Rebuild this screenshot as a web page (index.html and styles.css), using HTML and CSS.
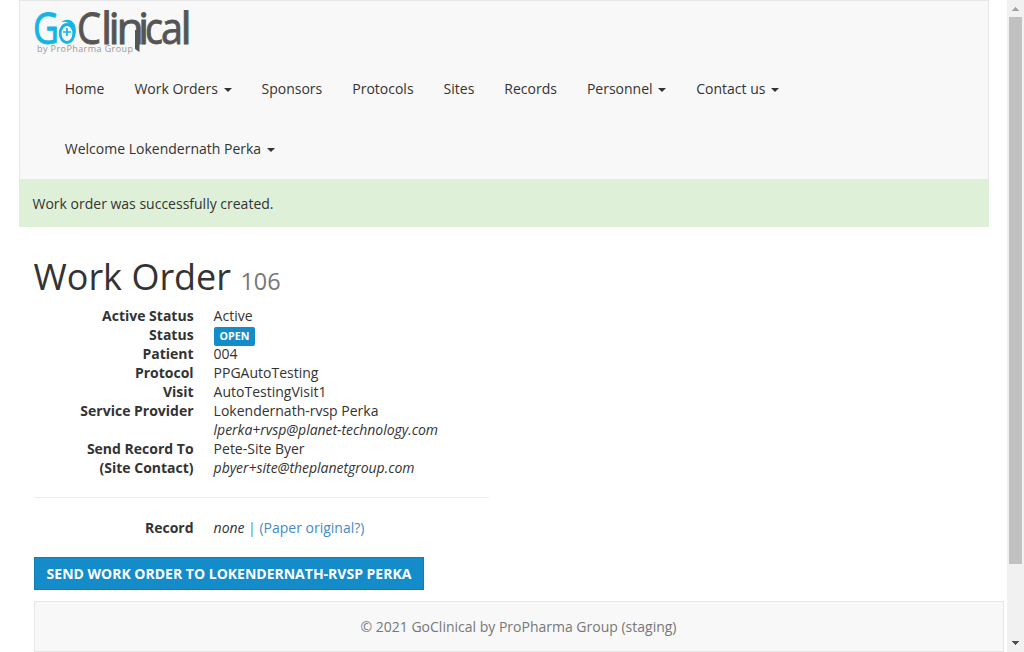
FILE: index.html
```html
<!DOCTYPE html>
<html lang="en">
<head>
<meta charset="utf-8">
<title>GoClinical - Work Order 106</title>
<link rel="stylesheet" href="styles.css">
</head>
<body>
<div class="window">
  <div class="page">
    <header class="navbar">
      <a class="brand">
        <svg width="160" height="50" viewBox="0 0 160 50" aria-label="GoClinical by ProPharma Group">
          <g class="logo-go">
            <text x="-1" y="37.500" font-size="43" textLength="26" lengthAdjust="spacingAndGlyphs">G</text>
          </g>
          <ellipse class="logo-ring" cx="33" cy="27.500" rx="6.800" ry="9"/>
          <path class="logo-swoosh" d="M27 16Q36 10.500 41 19Q44 29 37 36.500Q41 27 38 20.500Q34 14.500 27 16z"/>
          <path class="logo-plus" d="M33 22v8M29 26h8"/>
          <text class="logo-clinical" y="37.500" x="43">
            <tspan textLength="24" lengthAdjust="spacingAndGlyphs">C</tspan><tspan x="67">l</tspan><tspan x="74.500">i</tspan><tspan x="82.500">n</tspan><tspan x="104">i</tspan><tspan x="111" textLength="18" lengthAdjust="spacingAndGlyphs">c</tspan><tspan x="127" textLength="22" lengthAdjust="spacingAndGlyphs">a</tspan><tspan x="146.500">l</tspan>
          </text>
          <path class="logo-stem" d="M101 24h4.500v22l-4.500-3z"/>
          <text class="logo-tag" x="3" y="46" textLength="96">by ProPharma Group</text>
        </svg>
      </a>
      <nav>
        <ul class="menu">
          <li>Home</li>
          <li>Work Orders <span class="caret"></span></li>
          <li>Sponsors</li>
          <li>Protocols</li>
          <li>Sites</li>
          <li>Records</li>
          <li>Personnel <span class="caret"></span></li>
          <li>Contact us <span class="caret"></span></li>
        </ul>
        <ul class="menu">
          <li>Welcome Lokendernath Perka <span class="caret"></span></li>
        </ul>
      </nav>
    </header>
    <div class="flash">Work order was successfully created.</div>
    <main class="content">
      <h1>Work Order <small>106</small></h1>
      <dl class="details">
        <dt>Active Status</dt><dd>Active</dd>
        <dt>Status</dt><dd><span class="label">OPEN</span></dd>
        <dt>Patient</dt><dd>004</dd>
        <dt>Protocol</dt><dd>PPGAutoTesting</dd>
        <dt>Visit</dt><dd>AutoTestingVisit1</dd>
        <dt>Service Provider</dt><dd>Lokendernath-rvsp Perka<br><em>lperka+rvsp@planet-technology.com</em></dd>
        <dt>Send Record To<br>(Site Contact)</dt><dd>Pete-Site Byer<br><em>pbyer+site@theplanetgroup.com</em></dd>
      </dl>
      <hr>
      <dl class="details">
        <dt>Record</dt><dd><em>none</em> <a>| (Paper original?)</a></dd>
      </dl>
      <button class="send">SEND WORK ORDER TO LOKENDERNATH-RVSP PERKA</button>
    </main>
    <footer class="footer">© 2021 GoClinical by ProPharma Group (staging)</footer>
  </div>
  <div class="scrollbar">
    <svg width="17" height="17" shape-rendering="crispEdges"><path fill="#a3a3a3" d="M8 7h1v1h1v1h1v1h1v1H5v-1h1V9h1V8h1z"/></svg>
    <div class="thumb"></div>
    <svg width="17" height="17" shape-rendering="crispEdges"><path fill="#505050" d="M5 6h7v1h-1v1h-1v1H9v1H8V9H7V8H6V7H5z"/></svg>
  </div>
</div>
</body>
</html>
```
FILE: styles.css
```css
* { box-sizing: border-box; }
body {
  margin: 0;
  overflow: hidden;
  background: #fff;
  color: #333;
  font: 14px/19px "Open Sans", sans-serif;
}
.window { display: flex; height: 652px; }
.page { flex: 1; padding-left: 19px; }
.navbar {
  width: 970px;
  height: 179px;
  border: 1px solid #e7e7e7;
  border-bottom: 0;
  background: #f8f8f8;
}
.brand { display: block; height: 58px; padding: 5px 0 0 14px; }
.brand svg { display: block; overflow: visible; }
.logo-go text { fill: #14b5e5; stroke: #14b5e5; stroke-width: .9; font-family: "Open Sans", sans-serif; }
.logo-ring { fill: none; stroke: #14b5e5; stroke-width: 2.8; }
.logo-swoosh { fill: #14b5e5; }
.logo-plus { stroke: #14b5e5; stroke-width: 1.7; }
.logo-clinical { fill: #555; stroke: #555; stroke-width: .9; font: 44.5px "Open Sans", sans-serif; }
.logo-stem { fill: #555; }
.logo-tag { fill: #999; font: 9px "Open Sans", sans-serif; }
.menu { display: flex; height: 60px; margin: 0; padding: 0 0 0 29.8px; list-style: none; }
.menu li { padding: 20px 15px; line-height: 20px; }
.caret {
  display: inline-block;
  margin-left: 2px;
  vertical-align: middle;
  border-top: 4px solid #333;
  border-left: 4px solid transparent;
  border-right: 4px solid transparent;
}
.flash { width: 970px; height: 48px; padding: 15px 13.5px; background: #dff0d8; }
.content { height: 374px; padding: 30px 0 0 15px; }
h1 { margin: 0 0 5px -.5px; font-size: 36px; font-weight: 400; line-height: 40px; }
h1 small { color: #777; font-size: 23.4px; }
.details { display: grid; grid-template-columns: 159.6px 1fr; column-gap: 20px; margin: 0; }
.details dt { font-weight: 700; text-align: right; }
.details dd { margin: 0; }
.details em { letter-spacing: -.03px; }
.details a { color: #428bca; }
.label {
  display: block;
  width: 41px;
  height: 19px;
  margin: 2px 0 -2px .4px;
  border-radius: 2px;
  background: #158cca;
  color: #fff;
  font-size: 10.7px;
  font-weight: 700;
  line-height: 19px;
  text-align: center;
}
hr { width: 455px; margin: 20px 0; border: 0; border-top: 1px solid #eee; }
.send {
  display: block;
  width: 390px;
  height: 33px;
  margin-top: 20px;
  padding: 0;
  border: 1px solid #127bb2;
  background: #158cca;
  color: #fff;
  font: 700 14px/20px "Open Sans", sans-serif;
  white-space: nowrap;
}
.footer {
  width: 970px;
  height: 51px;
  margin-left: 15px;
  padding: 15px 1px 0 0;
  border: 1px solid #e7e7e7;
  background: #f8f8f8;
  color: #777;
  text-align: center;
}
.scrollbar { display: flex; flex-direction: column; align-items: center; width: 17px; background: #f1f1f1; }
.scrollbar svg { flex: none; }
.thumb { width: 13px; height: 547px; margin-bottom: auto; background: #c1c1c1; }
```
